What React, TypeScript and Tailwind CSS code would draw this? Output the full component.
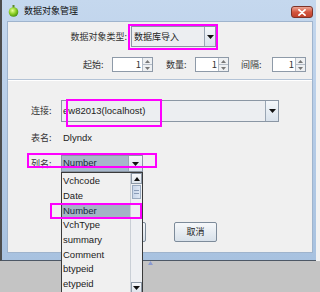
import React from "react";

const Spinner = ({ w }: { w: string }) => (
  <div className={`flex h-[15px] ${w} border border-[#8e9aa8] bg-white`}>
    <div className="flex-1 flex items-center justify-end pr-[1px] text-[9.5px] leading-none">1</div>
    <div className="w-[10px] flex flex-col border-l border-[#b4bcc6] bg-[#eef0f2]">
      <div className="flex-1 flex items-center justify-center border-b border-[#b4bcc6]">
        <svg width="5" height="3" viewBox="0 0 5 3"><path d="M0 3 L2.5 0 L5 3 Z" fill="#777" /></svg>
      </div>
      <div className="flex-1 flex items-center justify-center">
        <svg width="5" height="3" viewBox="0 0 5 3"><path d="M0 0 L2.5 3 L5 0 Z" fill="#777" /></svg>
      </div>
    </div>
  </div>
);

const Arrow = () => (
  <svg width="7" height="4" viewBox="0 0 7 4"><path d="M0 0 L7 0 L3.5 4 Z" fill="#111" /></svg>
);

const ArrowBtn = ({ w }: { w: string }) => (
  <div className={`${w} h-full flex items-center justify-center border-l border-[#9aa6b4] bg-gradient-to-b from-[#f4f7fa] to-[#d9e2ec]`}>
    <Arrow />
  </div>
);

const items = ["Vchcode", "Date", "Number", "VchType", "summary", "Comment", "btypeid", "etypeid"];

export default function App() {
  return (
    <div className="w-[320px] h-[292px] bg-[#c4c4c4] relative overflow-hidden font-['Liberation_Sans','Noto_Sans_CJK_SC',sans-serif] text-[#1e1e1e]">
      <div className="flex h-[261px]">
        <div className="w-[316px] h-full flex flex-col border-l-2 border-l-[#4d4d4d] border-b border-b-[#4d5866] bg-gradient-to-b from-[#c5d8ee] via-[#b6cce7] to-[#a8c2e0] pl-[5px] pr-[3px]">
          {/* title bar */}
          <div className="h-[21px] flex items-center shrink-0">
            <svg width="11" height="12" viewBox="0 0 11 12" className="ml-[1px]">
              <defs>
                <radialGradient id="g" cx="0.4" cy="0.35" r="0.7">
                  <stop offset="0" stopColor="#e8ff9a" />
                  <stop offset="0.5" stopColor="#8fd12a" />
                  <stop offset="1" stopColor="#3f8a0c" />
                </radialGradient>
              </defs>
              <rect x="4.5" y="0" width="2" height="3" fill="#5a8a2a" />
              <circle cx="5.5" cy="7" r="4.8" fill="url(#g)" />
            </svg>
            <span className="ml-[5px] text-[9px] leading-none text-[#111] font-['Noto_Sans_CJK_SC',sans-serif]">数据对象管理</span>
            <div className="ml-auto mr-[0px] mt-[3px] w-[22px] h-[12px] rounded-[3px] border border-[#7d3328] bg-gradient-to-b from-[#eba596] via-[#d3553f] to-[#c0412c] flex items-center justify-center">
              <svg width="8" height="7" viewBox="0 0 8 7">
                <path d="M1 0.8 L7 6.2 M7 0.8 L1 6.2" stroke="#fff" strokeWidth="1.8" strokeLinecap="round" />
              </svg>
            </div>
          </div>
          {/* content */}
          <div className="flex-1 mb-[7px] bg-[#f0f0f0] border border-[#9fb4cd] flex flex-col">
            {/* upper panel */}
            <div className="h-[57px] shrink-0 flex flex-col pt-[4px]">
              <div className="flex h-[21px] items-center">
                <div className="w-[119px] text-right text-[9px] font-['Noto_Sans_CJK_SC',sans-serif] text-[#333]">数据对象类型:</div>
                <div className="ml-[4px] w-[85px] h-[21px] flex border border-[#8a96a4] bg-[#eceef1]">
                  <div className="flex-1 flex items-center pl-[2px] text-[9px] font-['Noto_Sans_CJK_SC',sans-serif] text-[#222]">数据库导入</div>
                  <ArrowBtn w="w-[11px]" />
                </div>
              </div>
              <div className="flex h-[15px] items-center mt-[10px] text-[9px] font-['Noto_Sans_CJK_SC',sans-serif] text-[#333]">
                <span className="ml-[75px] w-[29px]">起始:</span>
                <Spinner w="w-[41px]" />
                <span className="ml-[13px] w-[29px]">数量:</span>
                <Spinner w="w-[34px]" />
                <span className="ml-[12px] w-[31px]">间隔:</span>
                <Spinner w="w-[34px]" />
              </div>
            </div>
            <div className="h-[1px] bg-[#b3c3d6] shrink-0" />
            <div className="h-[1px] bg-white shrink-0" />
            {/* lower panel */}
            <div className="flex-1 flex flex-col pt-[19px] pl-[23px] text-[9px]">
              <div className="flex h-[22px] items-center">
                <span className="w-[30px] font-['Noto_Sans_CJK_SC',sans-serif] text-[#333]">连接:</span>
                <div className="w-[218px] h-[22px] flex border border-[#8a96a4] bg-[#eceef1]">
                  <div className="flex-1 flex items-center pl-[1px] text-[9.5px] text-[#222]">ew82013(localhost)</div>
                  <ArrowBtn w="w-[13px]" />
                </div>
              </div>
              <div className="flex h-[16px] items-center mt-[8px]">
                <span className="w-[32px] font-['Noto_Sans_CJK_SC',sans-serif] text-[#333]">表名:</span>
                <span className="text-[9.5px] text-[#222]">Dlyndx</span>
              </div>
              <div className="flex h-[17px] items-center mt-[9px]">
                <span className="w-[30px] font-['Noto_Sans_CJK_SC',sans-serif] text-[#333]">列名:</span>
                <div className="w-[82px] h-[17px] flex border border-[#8a96a4] bg-[#eceef1]">
                  <div className="flex-1 flex items-center pl-[1px] bg-[#a7b7ca] text-[9.5px] text-[#1a2a3a]">Number</div>
                  <ArrowBtn w="w-[14px]" />
                </div>
              </div>
              <div className="flex h-[20px] mt-[50px]">
                <div className="ml-[69px] w-[46px] h-[20px] rounded-[2px] border border-[#7d8b9a] bg-gradient-to-b from-[#f6f8fa] to-[#d8e1ea] flex items-center justify-center font-['Noto_Sans_CJK_SC',sans-serif]">确定</div>
                <div className="ml-[28px] w-[43px] h-[20px] rounded-[2px] border border-[#7d8b9a] bg-gradient-to-b from-[#f6f8fa] to-[#d8e1ea] flex items-center justify-center font-['Noto_Sans_CJK_SC',sans-serif] text-[#222]">取消</div>
              </div>
            </div>
          </div>
        </div>
        <div className="flex-1 bg-[#f2f2f2]" />
      </div>

      {/* small marker */}
      <svg className="absolute left-[148px] top-[261px]" width="5" height="4" viewBox="0 0 5 4">
        <path d="M0 4 L2.5 0 L5 4 Z" fill="#8a9ad0" />
      </svg>

      {/* dropdown list */}
      <div className="absolute left-[61px] top-[172px] w-[82px] h-[121px] border-x border-t border-[#3a3a3a] bg-[#f0f0f0] flex">
        <div className="flex-1 flex flex-col pt-[1px] overflow-hidden">
          {items.map((it) => (
            <div
              key={it}
              className={`h-[14.7px] shrink-0 flex items-center pl-[1px] text-[9.5px] ${it === "Number" ? "bg-[#a3b3c6] text-[#1a2a3a]" : "text-[#222]"}`}
            >
              {it}
            </div>
          ))}
        </div>
        <div className="w-[12px] flex flex-col border-l border-[#c9cfd6] bg-[#eef0f3]">
          <div className="h-[11px] flex items-center justify-center border border-[#8e9aa8] bg-gradient-to-b from-[#f8f9fb] to-[#dde4ec]">
            <svg width="6" height="4" viewBox="0 0 6 4"><path d="M0 4 L3 0 L6 4 Z" fill="#111" /></svg>
          </div>
          <div className="mt-[1px] h-[14px] mx-[1px] border border-[#9aaac0] bg-gradient-to-r from-[#c8d6ea] to-[#dfe8f4] flex items-center justify-center">
            <div className="w-[5px] h-[4px] border-y border-[#8a9cb8]" />
          </div>
          <div className="flex-1" />
          <div className="h-[11px] flex items-center justify-center border border-[#8e9aa8] bg-gradient-to-b from-[#f8f9fb] to-[#dde4ec]">
            <Arrow />
          </div>
        </div>
      </div>

      {/* annotation boxes */}
      <div className="absolute left-[128px] top-[24px] w-[90px] h-[26px] border-2 border-[#ff00ff]" />
      <div className="absolute left-[66px] top-[99px] w-[96px] h-[28px] border-2 border-[#ff00ff]" />
      <div className="absolute left-[27px] top-[153px] w-[130px] h-[15px] border-2 border-[#ff00ff]" />
      <div className="absolute left-[50px] top-[203px] w-[92px] h-[16px] border-2 border-[#ff00ff]" />
    </div>
  );
}
